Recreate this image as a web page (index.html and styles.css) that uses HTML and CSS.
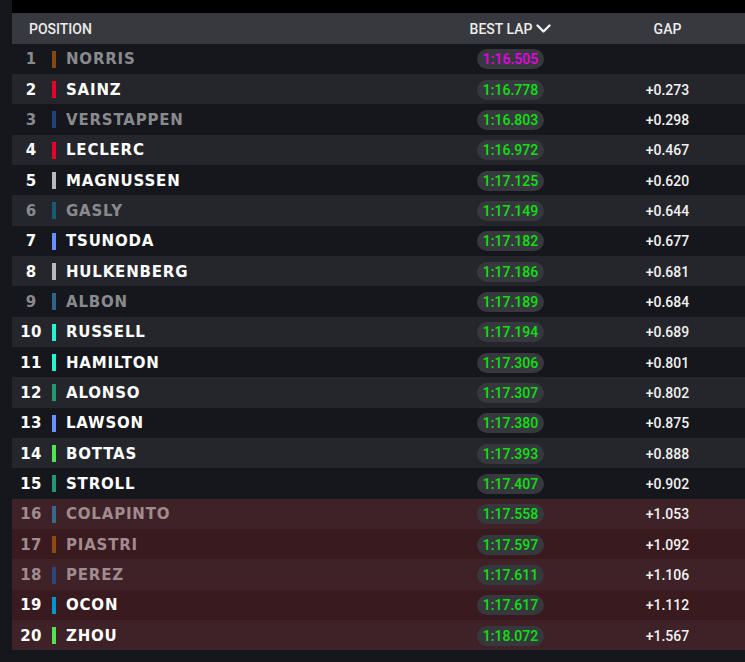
FILE: index.html
```html
<!DOCTYPE html>
<html>
<head>
<meta charset="utf-8">
<link rel="stylesheet" href="styles.css">
</head>
<body>
<div class="board">
  <div class="topbar"></div>
  <div class="head">
    <div class="h-pos">POSITION</div>
    <div class="h-lap">BEST LAP <svg class="chev" width="15" height="9" viewBox="0 0 15 9"><path d="M1.5 1.5 L7.5 7.5 L13.5 1.5" fill="none" stroke="#f0f0f0" stroke-width="2.4" stroke-linecap="round" stroke-linejoin="round"/></svg></div>
    <div class="h-gap">GAP</div>
  </div>
  <div class="rows">
    <div class="row dim"><span class="pos">1</span><span class="bar" style="background:#b35f0a"></span><span class="name">NORRIS</span><span class="lap"><span class="pill purple">1:16.505</span></span><span class="gap"></span></div>
    <div class="row"><span class="pos">2</span><span class="bar" style="background:#e8002d"></span><span class="name">SAINZ</span><span class="lap"><span class="pill">1:16.778</span></span><span class="gap">+0.273</span></div>
    <div class="row dim"><span class="pos">3</span><span class="bar" style="background:#2456a0"></span><span class="name">VERSTAPPEN</span><span class="lap"><span class="pill">1:16.803</span></span><span class="gap">+0.298</span></div>
    <div class="row"><span class="pos">4</span><span class="bar" style="background:#e8002d"></span><span class="name">LECLERC</span><span class="lap"><span class="pill">1:16.972</span></span><span class="gap">+0.467</span></div>
    <div class="row"><span class="pos">5</span><span class="bar" style="background:#b6babd"></span><span class="name">MAGNUSSEN</span><span class="lap"><span class="pill">1:17.125</span></span><span class="gap">+0.620</span></div>
    <div class="row dim"><span class="pos">6</span><span class="bar" style="background:#0f7290"></span><span class="name">GASLY</span><span class="lap"><span class="pill">1:17.149</span></span><span class="gap">+0.644</span></div>
    <div class="row"><span class="pos">7</span><span class="bar" style="background:#6692ff"></span><span class="name">TSUNODA</span><span class="lap"><span class="pill">1:17.182</span></span><span class="gap">+0.677</span></div>
    <div class="row"><span class="pos">8</span><span class="bar" style="background:#b6babd"></span><span class="name">HULKENBERG</span><span class="lap"><span class="pill">1:17.186</span></span><span class="gap">+0.681</span></div>
    <div class="row dim"><span class="pos">9</span><span class="bar" style="background:#3a84b8"></span><span class="name">ALBON</span><span class="lap"><span class="pill">1:17.189</span></span><span class="gap">+0.684</span></div>
    <div class="row"><span class="pos">10</span><span class="bar" style="background:#27f4d2"></span><span class="name">RUSSELL</span><span class="lap"><span class="pill">1:17.194</span></span><span class="gap">+0.689</span></div>
    <div class="row"><span class="pos">11</span><span class="bar" style="background:#27f4d2"></span><span class="name">HAMILTON</span><span class="lap"><span class="pill">1:17.306</span></span><span class="gap">+0.801</span></div>
    <div class="row"><span class="pos">12</span><span class="bar" style="background:#229971"></span><span class="name">ALONSO</span><span class="lap"><span class="pill">1:17.307</span></span><span class="gap">+0.802</span></div>
    <div class="row"><span class="pos">13</span><span class="bar" style="background:#6692ff"></span><span class="name">LAWSON</span><span class="lap"><span class="pill">1:17.380</span></span><span class="gap">+0.875</span></div>
    <div class="row"><span class="pos">14</span><span class="bar" style="background:#52e252"></span><span class="name">BOTTAS</span><span class="lap"><span class="pill">1:17.393</span></span><span class="gap">+0.888</span></div>
    <div class="row"><span class="pos">15</span><span class="bar" style="background:#229971"></span><span class="name">STROLL</span><span class="lap"><span class="pill">1:17.407</span></span><span class="gap">+0.902</span></div>
    <div class="row out dim"><span class="pos">16</span><span class="bar" style="background:#3a84b8"></span><span class="name">COLAPINTO</span><span class="lap"><span class="pill">1:17.558</span></span><span class="gap">+1.053</span></div>
    <div class="row out dim"><span class="pos">17</span><span class="bar" style="background:#b35f0a"></span><span class="name">PIASTRI</span><span class="lap"><span class="pill">1:17.597</span></span><span class="gap">+1.092</span></div>
    <div class="row out dim"><span class="pos">18</span><span class="bar" style="background:#2456a0"></span><span class="name">PEREZ</span><span class="lap"><span class="pill">1:17.611</span></span><span class="gap">+1.106</span></div>
    <div class="row out"><span class="pos">19</span><span class="bar" style="background:#0093cc"></span><span class="name">OCON</span><span class="lap"><span class="pill">1:17.617</span></span><span class="gap">+1.112</span></div>
    <div class="row out"><span class="pos">20</span><span class="bar" style="background:#52e252"></span><span class="name">ZHOU</span><span class="lap"><span class="pill">1:18.072</span></span><span class="gap">+1.567</span></div>
  </div>
</div>
</body>
</html>
```

FILE: styles.css
```css
html, body {
  margin: 0;
  padding: 0;
  background: #16171c;
}
.board {
  margin-left: 12px;
  width: 733px;
}
.topbar {
  height: 13px;
  background: #000;
}
.head {
  height: 30.5px;
  background: #38393e;
  display: grid;
  grid-template-columns: 1fr 120px 20px 155px;
  align-items: center;
  font-family: Roboto, "Liberation Sans", sans-serif;
  font-size: 14px;
  font-weight: 500;
  color: #ececec;
  padding-top: 1px;
  box-sizing: border-box;
}
.h-pos {
  padding-left: 17px;
}
.h-lap {
  display: flex;
  align-items: center;
  justify-content: center;
  gap: 4px;
  grid-column: 2;
  padding-left: 1px;
}
.chev {
  display: block;
}
.h-gap {
  grid-column: 4;
  text-align: center;
}
.row {
  height: 30.35px;
  display: grid;
  grid-template-columns: 38px 16px 1fr 120px 20px 155px;
  align-items: center;
  background: #16171c;
  color: #ffffff;
  padding-top: 1px;
  box-sizing: border-box;
}
.row:nth-child(even) {
  background: #25262b;
}
.row.out {
  background: #391a1f;
}
.row.out:nth-child(even) {
  background: #3e2227;
}
.pos, .name {
  font-family: "DejaVu Sans", sans-serif;
  font-weight: bold;
  font-size: 15px;
  letter-spacing: 0.8px;
}
.pos {
  text-align: center;
  letter-spacing: 0.3px;
}
.bar {
  width: 4px;
  height: 17px;
  margin-left: 2px;
}
.dim .pos, .dim .name {
  color: #898a8e;
}
.dim .bar {
  opacity: 0.7;
}
.out.dim .pos, .out.dim .name {
  color: #a08c8f;
}
.lap {
  grid-column: 4;
  display: flex;
  justify-content: center;
}
.pill {
  display: inline-block;
  width: 67px;
  height: 20px;
  line-height: 20px;
  border-radius: 10px;
  background: #37383d;
  text-align: center;
  font-family: Roboto, "Liberation Sans", sans-serif;
  font-size: 14px;
  font-weight: 500;
  color: #10e010;
  padding-left: 1px;
  box-sizing: border-box;
}
.pill.purple {
  color: #e800e8;
}
.gap {
  grid-column: 6;
  text-align: center;
  font-family: Roboto, "Liberation Sans", sans-serif;
  font-size: 14px;
  font-weight: 500;
  color: #f2f2f2;
}
```
